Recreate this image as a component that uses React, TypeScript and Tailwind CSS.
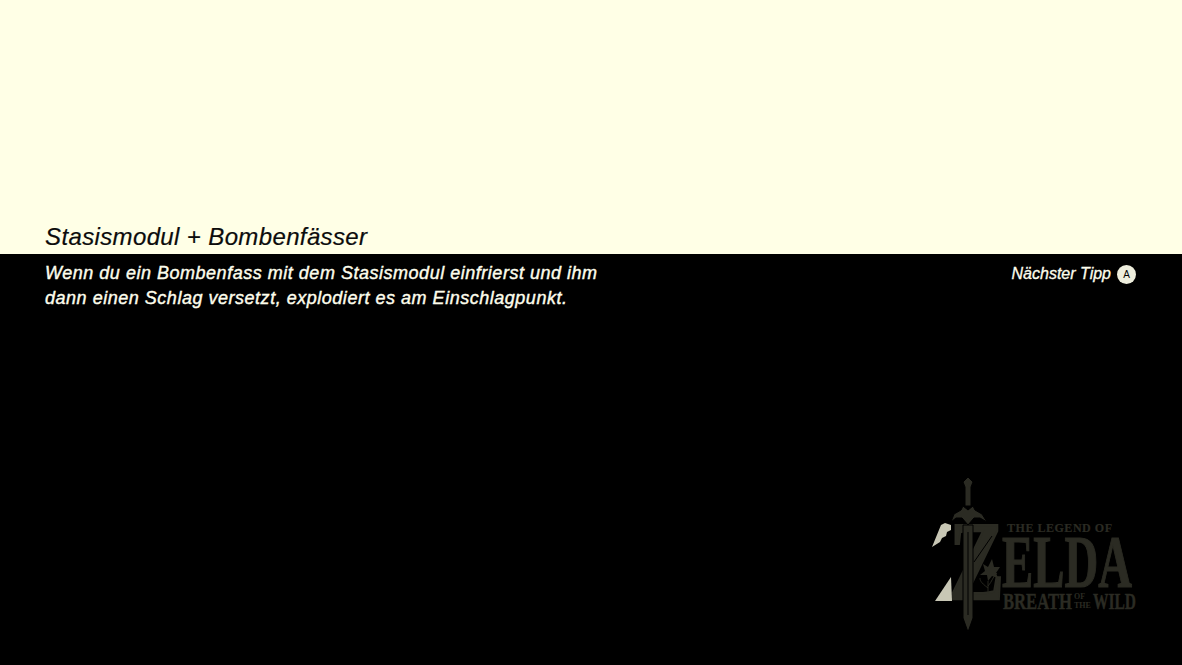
const LOGO = '#2b2b23';
const SHARD = '#c8c7b5';

// Zelda logo, coordinates follow the screenshot (230x170 box)
function ZeldaLogo() {
  return (
    <svg width="230" height="170" viewBox="0 0 230 170" className="block not-italic font-['Liberation_Serif',serif] font-bold">
      <g fill={LOGO} stroke={LOGO}>
        <text x="0" y="0" fontSize="112" strokeWidth="2.5" transform="translate(29 129) scale(0.74 1)">Z</text>
        <text x="82" y="117" fontSize="74" strokeWidth="1.2" textLength="130" lengthAdjust="spacingAndGlyphs">ELDA</text>
        <text x="87" y="62" fontSize="12" strokeWidth="0.2" textLength="105" lengthAdjust="spacing">THE LEGEND OF</text>
        <text x="83" y="139" fontSize="23" strokeWidth="0.4" textLength="69" lengthAdjust="spacingAndGlyphs">BREATH</text>
        <text x="154" y="129" fontSize="9" strokeWidth="0" textLength="11" lengthAdjust="spacingAndGlyphs">OF</text>
        <text x="154" y="138" fontSize="8" strokeWidth="0" textLength="17" lengthAdjust="spacingAndGlyphs">THE</text>
        <text x="173" y="139" fontSize="23" strokeWidth="0.4" textLength="43" lengthAdjust="spacingAndGlyphs">WILD</text>
      </g>
      {/* shards */}
      <polygon points="12,77 21,55 25,53 31,55 31,60 27,62 26,66 22,68 20,72" fill={SHARD} />
      <polygon points="15,131 31,107 32,131" fill={SHARD} />
      {/* sword */}
      <g fill={LOGO} stroke="#000" strokeWidth="1">
        <polygon points="48,7 53,12 51,17 51,36 45,36 45,17 43,12" />
        <path d="M31 52 L34 44 L41 40 L43 36 L48 40 L53 36 L55 40 L62 44 L67 52 L60 48 L54 48 L48 55 L42 48 L36 48 Z" />
        <polygon points="43,55 53,55 53,148 48,162 43,148" />
      </g>
      <g stroke="#000" strokeWidth="1" fill="none">
        <path d="M48 62 L48 145" />
        <path d="M54 92 L72 66" />
      </g>
      {/* flower */}
      <g fill={LOGO}>
        <path d="M60 105 L65 101 L63 94 L68 97 L72 89 L74 97 L80 97 L76 103 L78 108 L72 106 L68 111 L67 105 Z" />
      </g>
      <g stroke={LOGO} strokeWidth="0.9" fill="none">
        <path d="M68 111 L68 123 M68 118 C60 112 60 110 60 108 M68 116 C72 112 73 106 77 103" />
      </g>
    </svg>
  );
}

export default function App() {
  return (
    <div className="h-[665px] w-[1182px] flex flex-col overflow-hidden bg-black font-['Liberation_Sans',sans-serif] italic">
      <div className="h-[254px] bg-[#ffffe6] flex items-end px-[45px] pb-[1px]">
        <h1 className="text-[24px] leading-[32px] tracking-[0.37px] text-[#0c0c0c] font-normal [-webkit-text-stroke:0.2px_#0c0c0c]">Stasismodul + Bombenfässer</h1>
      </div>
      <div className="flex-1 flex flex-col justify-between">
        <div className="flex justify-between pl-[45px] pr-[46px] pt-[7px]">
          <p className="text-[18px] leading-[25px] tracking-[0.52px] text-[#fdfdec] [-webkit-text-stroke:0.4px_#fdfdec]">
            Wenn du ein Bombenfass mit dem Stasismodul einfrierst und ihm
            <br />
            dann einen Schlag versetzt, explodiert es am Einschlagpunkt.
          </p>
          <div className="flex items-center gap-[6px] h-[26px]">
            <span className="text-[16px] text-[#fdfdec] [-webkit-text-stroke:0.3px_#fdfdec]">Nächster Tipp</span>
            <span className="w-[19px] h-[19px] rounded-full bg-[#eeeedd] text-black text-[10px] not-italic flex items-center justify-center">A</span>
          </div>
        </div>
        <div className="flex justify-end pr-[32px] pb-[25px]">
          <ZeldaLogo />
        </div>
      </div>
    </div>
  );
}
